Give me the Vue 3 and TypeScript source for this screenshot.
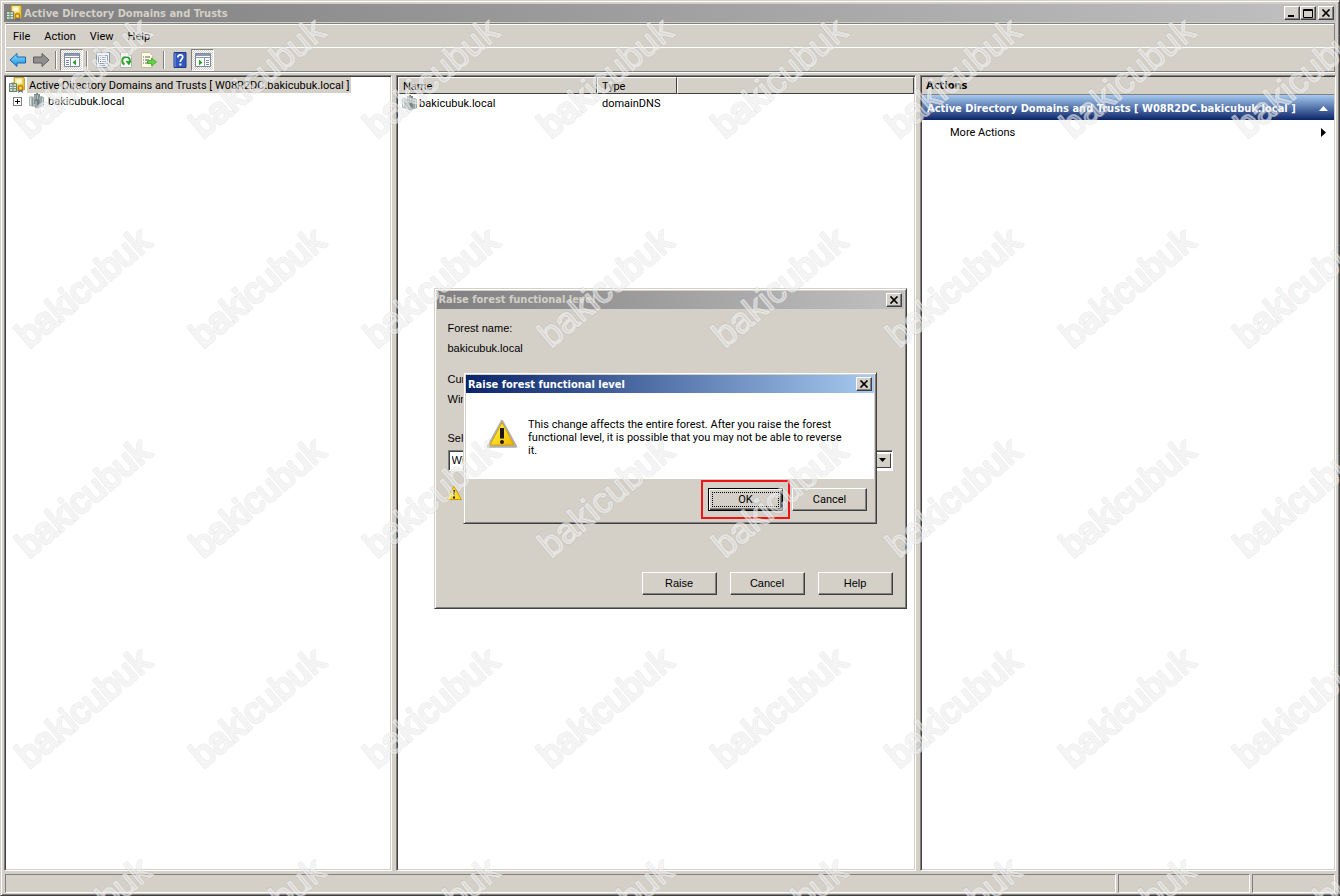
<script setup lang="ts">
import { ref } from 'vue'

const menus: string[] = ['File', 'Action', 'View', 'Help']
const snapIn = 'Active Directory Domains and Trusts'
const rootNode = 'Active Directory Domains and Trusts [ W08R2DC.bakicubuk.local ]'
const domain = 'bakicubuk.local'
const level = ref('r2')

interface Stamp { x: number; y: number }
const stamps: Stamp[] = []
for (let row = 0; row < 5; row++) {
  for (let col = 0; col < 8; col++) {
    stamps.push({ x: 29 + col * 174, y: 139 + row * 210 })
  }
}
</script>

<template>
  <svg class="defs" width="0" height="0" aria-hidden="true">
    <defs>
      <linearGradient id="warn" x1="0" y1="0" x2="1" y2="1">
        <stop offset="0" stop-color="#fff27a" />
        <stop offset=".5" stop-color="#fbdc20" />
        <stop offset="1" stop-color="#f0b008" />
      </linearGradient>
      <linearGradient id="sky" x1="0" y1="0" x2="0" y2="1">
        <stop offset="0" stop-color="#8fdcff" />
        <stop offset="1" stop-color="#1590e0" />
      </linearGradient>
      <symbol id="app-icon" viewBox="0 0 16 16">
        <path d="M5 .5 15 .5 15.500 1.500V13L8 14 5 13z" fill="#e6c23c" stroke="#a88a26" stroke-width=".7" />
        <path d="M6 1.200 13.500 1.200V7L6 8z" fill="#f9ea94" />
        <path d="M7.500 2.500H12V5.500H7.500z" fill="#fffde8" />
        <path d="M0 6.500 4 5.500 8 6.500V15H0z" fill="#6d8373" />
        <path d="M1 8h2.500M4.500 8h2.500M1 10.500h2.500M4.500 10.500h2.500M1 13h2.500M4.500 13h2.500" stroke="#e1f0df" stroke-width="1.300" />
        <path d="M10 12 9 16 11.500 14.500 14 16 13 12" fill="#4468a2" />
        <circle cx="11.500" cy="11" r="2.500" fill="#f0a51c" stroke="#a86508" stroke-width=".8" />
        <circle cx="11.500" cy="11" r="1" fill="#fff3b4" />
      </symbol>
      <symbol id="domain-icon" viewBox="0 0 16 16">
        <path d="M5 1H7V0H9V1H11V11H5z" fill="#7f8c8c" />
        <path d="M6 2v8M8.500 2v8" stroke="#b5c0bf" />
        <path d="M0 4 3 3 5 4V14L3 13.500 0 12.500z" fill="#b1bab9" />
        <path d="M1.500 5v7" stroke="#dfe5e4" />
        <path d="M3.500 5v8" stroke="#8d9998" />
        <path d="M10 4 12.500 3 15 4.500V13L12 14 10 13.500z" fill="#9aa6a3" />
        <path d="M13.500 5v8" stroke="#c8d2d0" />
        <path d="M5.500 7 8 6 10.500 7V15L8 15.500 5.500 14z" fill="#70807e" />
        <path d="M7 8v6" stroke="#c6d2d1" />
      </symbol>
      <symbol id="warn-icon" viewBox="0 0 32 32">
        <path d="M16 3 30 28.500H2z" fill="#b9b9b9" stroke="#b0b0b0" stroke-width="2.500" stroke-linejoin="round" />
        <path d="M16 4.500 28 27H4z" fill="url(#warn)" stroke="#d9a400" stroke-linejoin="round" />
        <path d="M14 10h4V20.500h-4z" fill="#1c1a10" />
        <circle cx="16" cy="24" r="2" fill="#1c1a10" />
      </symbol>
      <symbol id="warn-small" viewBox="0 0 16 16">
        <path d="M8 1 15.300 14.500H.7z" fill="#fbdc20" stroke="#c99b10" stroke-linejoin="round" />
        <path d="M7 5h2v5H7zM7 11.500h2v2H7z" fill="#1c1a10" />
      </symbol>
      <symbol id="close-glyph" viewBox="0 0 10 8">
        <path d="M1.500.5 8.500 7.500M8.500.5 1.500 7.500" stroke="#000" stroke-width="1.700" />
      </symbol>
    </defs>
  </svg>

  <main class="window">
    <header class="titlebar inactive main-title">
      <svg class="ico16"><use href="#app-icon" /></svg>
      <h1>{{ snapIn }}</h1>
      <div class="controls">
        <button class="cap" aria-label="Minimize"><svg width="10" height="8"><path d="M1 7h6" stroke="#000" stroke-width="2" /></svg></button>
        <button class="cap" aria-label="Maximize"><svg width="10" height="9"><path d="M.5 1.500h9M.5.5v8h9v-8z" fill="none" stroke="#000" /></svg></button>
        <button class="cap close" aria-label="Close"><svg width="10" height="8"><use href="#close-glyph" /></svg></button>
      </div>
    </header>

    <nav class="menubar" aria-label="Menu">
      <button v-for="m in menus" :key="m" class="menu">{{ m }}</button>
    </nav>

    <div class="toolbar" role="toolbar" aria-label="Tools">
      <button class="tool" aria-label="Back">
        <svg class="arrow" viewBox="0 0 18 16"><path d="M1 8 8 1.500V5h8.500v6H8v3.500z" fill="url(#sky)" stroke="#1769ad" stroke-linejoin="round" /></svg>
      </button>
      <button class="tool" aria-label="Forward">
        <svg class="arrow" viewBox="0 0 18 16"><path d="M17 8 10 1.500V5H1.500v6H10v3.500z" fill="#8f8f8f" stroke="#5e5e5e" stroke-linejoin="round" /></svg>
      </button>
      <span class="sep"></span>
      <button class="tool pressed" aria-label="Show console tree">
        <svg class="ico16" viewBox="0 0 16 16"><path d="M.5 1.500h15v13H.5z" fill="#fff" stroke="#7d8a9b" /><path d="M1 2h14v2H1z" fill="#8b9cb4" /><path d="M1 5.500h14M6.500 6v8" stroke="#8b97a7" /><path d="M2 8.500h3M2 10.500h3M2 12.500h3" stroke="#678bc1" /><path d="M12 7.500v6L8.500 10.500z" fill="#2ca02a" /></svg>
      </button>
      <span class="sep"></span>
      <button class="tool" aria-label="Properties">
        <svg class="ico16" viewBox="0 0 16 16"><path d="M1.500.5h13v11l-3 4h-10z" fill="#f2f5f9" stroke="#8694a7" /><path d="M3.500 3.500h9v8h-9z" fill="#fff" stroke="#8fa2bb" /><path d="M5 5.500h1M7 5.500h4M5 7.500h1M7 7.500h4M5 9.500h1M7 9.500h4" stroke="#607792" /><path d="M4 13.500h6" stroke="#9babbd" /></svg>
      </button>
      <button class="tool" aria-label="Refresh">
        <svg class="ico16" viewBox="0 0 16 16"><path d="M2.500.5h8l3 3v12h-11z" fill="#fff" stroke="#b4b4b4" /><path d="M10.500.5v3h3" fill="none" stroke="#b4b4b4" /><path d="M6.500 12.500C3 11 3.500 5 8 5 11.500 5 12.500 8 11.500 10" fill="none" stroke="#2ba52b" stroke-width="2" /><path d="M7.500 9 13.500 9 11 13.500z" fill="#2ba52b" /></svg>
      </button>
      <button class="tool" aria-label="Export list">
        <svg class="ico16" viewBox="0 0 16 16"><path d="M.5.500h8l3 3v12H.5z" fill="#fffbe2" stroke="#c6bda2" /><path d="M2 5h1M4 5h5M2 8h1M4 8h4M2 11h1M4 11h4" stroke="#5a5a70" /><path d="M6.500 8.500h4V6l5 4-5 4v-2.500h-4z" fill="#66d33d" stroke="#2e9d26" stroke-width=".7" /></svg>
      </button>
      <span class="sep"></span>
      <button class="tool" aria-label="Help">
        <svg class="ico16" viewBox="0 0 16 16"><path d="M2 .5h12v15H2z" fill="#3159bd" stroke="#203b88" /><path d="M3 1v14" stroke="#7898e6" /><path d="M5.800 5.500C5.800 2 11 2 10.700 5.200 10.500 7.500 8.300 7.300 8.300 10" fill="none" stroke="#fff" stroke-width="1.700" /><path d="M7.400 11.500h2v2h-2z" fill="#fff" /></svg>
      </button>
      <button class="tool pressed" aria-label="Show action pane">
        <svg class="ico16" viewBox="0 0 16 16"><path d="M.5 1.500h15v13H.5z" fill="#fff" stroke="#7d8a9b" /><path d="M1 2h14v2H1z" fill="#8b9cb4" /><path d="M1 5.500h14M9.500 6v8" stroke="#8b97a7" /><path d="M11 8.500h3M11 10.500h3M11 12.500h3" stroke="#678bc1" /><path d="M4 7.500v6l3.500-3z" fill="#2ca02a" /></svg>
      </button>
    </div>

    <div class="panes">
      <section class="pane" aria-label="Console tree">
        <div class="tree-row root">
          <svg class="ico16"><use href="#app-icon" /></svg>
          <span class="selected">{{ rootNode }}</span>
        </div>
        <div class="tree-row child">
          <button class="expander" aria-label="Expand"><svg width="9" height="9"><path d="M2 4.500h5M4.500 2v5" stroke="#000" /></svg></button>
          <svg class="ico16"><use href="#domain-icon" /></svg>
          <span>{{ domain }}</span>
        </div>
      </section>

      <section class="pane" aria-label="Details">
        <table class="list">
          <colgroup><col class="c-name" /><col class="c-type" /><col /></colgroup>
          <thead><tr><th>Name</th><th>Type</th><th class="rest"></th></tr></thead>
          <tbody>
            <tr>
              <td><span class="cell"><svg class="ico16"><use href="#domain-icon" /></svg>{{ domain }}</span></td>
              <td class="type">domainDNS</td>
              <td></td>
            </tr>
          </tbody>
        </table>
      </section>

      <section class="pane" aria-label="Actions">
        <h2 class="actions-head">Actions</h2>
        <button class="group">
          <span>{{ rootNode }}</span>
          <svg width="9" height="5"><path d="M0 5 4.500 0 9 5z" fill="#fff" /></svg>
        </button>
        <button class="more">
          <span>More Actions</span>
          <svg width="5" height="9"><path d="M0 0 5 4.500 0 9z" fill="#000" /></svg>
        </button>
      </section>
    </div>

    <footer class="status">
      <span class="wide"></span><span class="mid"></span><span class="small"></span>
    </footer>
  </main>

  <div class="layer">
    <section class="dialog forest" role="dialog" aria-labelledby="forest-title">
      <header class="titlebar inactive">
        <h2 id="forest-title">Raise forest functional level</h2>
        <button class="cap close" aria-label="Close"><svg width="10" height="8"><use href="#close-glyph" /></svg></button>
      </header>
      <div class="forest-body">
        <p>Forest name:</p>
        <p>{{ domain }}</p>
        <p class="gap">Cur</p>
        <p>Win</p>
        <label class="pick" for="level">Sel</label>
        <div class="combo">
          <select id="level" v-model="level"><option value="r2">Wi</option></select>
          <span class="drop"><svg width="7" height="4"><path d="M0 0h7L3.500 4z" /></svg></span>
        </div>
        <svg class="small-warn"><use href="#warn-small" /></svg>
        <div class="buttons">
          <button class="btn">Raise</button>
          <button class="btn">Cancel</button>
          <button class="btn">Help</button>
        </div>
      </div>
    </section>
  </div>

  <div class="layer">
    <section class="dialog confirm" role="alertdialog" aria-labelledby="confirm-title">
      <header class="titlebar active">
        <h2 id="confirm-title">Raise forest functional level</h2>
        <button class="cap close" aria-label="Close"><svg width="10" height="8"><use href="#close-glyph" /></svg></button>
      </header>
      <div class="message">
        <svg class="big-warn"><use href="#warn-icon" /></svg>
        <p>This change affects the entire forest. After you raise the forest functional level, it is possible that you may not be able to reverse it.</p>
      </div>
      <div class="confirm-buttons">
        <span class="marker"><button class="btn default"><span>OK</span></button></span>
        <button class="btn">Cancel</button>
      </div>
    </section>
  </div>

  <svg class="watermark" aria-hidden="true">
    <g v-for="(s, i) in stamps" :key="i" :transform="`translate(${s.x} ${s.y}) rotate(-40)`">
      <text class="edge">bakicubuk</text>
      <text class="core">bakicubuk</text>
    </g>
  </svg>
</template>

<style>
html, body, #app { height: 100%; }
body { margin: 0; overflow: hidden; }
</style>

<style scoped>
* { box-sizing: border-box; }
.defs { position: absolute; }
.window, .dialog { font: 11px/13px Roboto, "Noto Sans", sans-serif; color: #000; }
button, select { font: inherit; color: inherit; border: 0; padding: 0; margin: 0; background: none; border-radius: 0; }
h1, h2, p { margin: 0; font-size: 11px; }
h1, h2, .group { font-family: "DejaVu Sans Condensed", "Noto Sans", sans-serif; }
p { font-weight: normal; }
svg { display: block; flex: none; }
.ico16 { width: 16px; height: 16px; }

.window {
  height: 100%; min-height: 500px; display: flex; flex-direction: column;
  background: #d4d0c8; padding: 3px 3px 2px;
  border: 1px solid; border-color: #d4d0c8 #404040 #404040 #d4d0c8;
  box-shadow: inset 1px 1px #fff, inset -1px -1px #808080;
}
.titlebar { display: flex; align-items: center; height: 18px; padding: 0 2px; color: #fff; flex: none; }
.titlebar h1, .titlebar h2 { flex: 1; font-weight: bold; white-space: nowrap; }
.inactive { background: linear-gradient(90deg, #808080, #c0c0c0); color: #d4d0c8; }
.active { background: linear-gradient(90deg, #0a246a, #a6caf0); }
.main-title { gap: 2px; }
.controls { display: flex; }
.cap {
  width: 16px; height: 14px; display: grid; place-items: center; background: #d4d0c8;
  border: 1px solid; border-color: #fff #404040 #404040 #fff; box-shadow: inset -1px -1px #808080;
}
.controls .close { margin-left: 2px; }

.menubar {
  height: 25px; margin: 1px 1px 0; display: flex; align-items: center; flex: none;
  border: 1px solid; border-color: #808080 #808080 #fff #fff; box-shadow: inset 0 1px #fff;
}
.menu { padding: 1px 7px 0; height: 20px; }
.toolbar {
  height: 24px; margin: 0 1px; display: flex; align-items: center; flex: none;
  border: 1px solid; border-color: #d4d0c8 #808080 #808080 #fff; box-shadow: 0 1px #fff;
}
.tool { width: 23px; height: 22px; display: grid; place-items: center; }
.arrow { width: 18px; height: 16px; }
.pressed {
  border: 1px solid; border-color: #808080 #fff #fff #808080;
  background: repeating-conic-gradient(#fff 0 25%, #d4d0c8 0 50%) 0 0 / 2px 2px;
}
.sep { width: 1px; height: 18px; margin: 0 4px 0 3px; background: #808080; box-shadow: 1px 0 #fff; }

.panes { flex: 1; min-height: 0; margin-top: 3px; display: grid; grid-template-columns: 388fr 520fr 416fr; gap: 4px; }
.pane {
  min-width: 0; overflow: hidden; background: #fff; border: 1px solid;
  border-color: #808080 #fff #fff #808080; box-shadow: inset 1px 1px #404040, inset -1px -1px #d4d0c8; padding: 1px;
}
.tree-row { display: flex; align-items: center; height: 16px; white-space: nowrap; }
.root { padding-left: 3px; gap: 2px; }
.selected { background: #d4d0c8; padding: 2px 2px 1px; }
.child { padding-left: 7px; gap: 7px; }
.child span { margin-left: -4px; }
.expander { width: 9px; height: 9px; box-shadow: inset 0 0 0 1px #808080; }

.list { width: 100%; border-collapse: separate; border-spacing: 0; table-layout: fixed; }
.c-name { width: 199px; }
.c-type { width: 80px; }
th {
  height: 17px; padding: 2px 4px 0; font-weight: normal; text-align: left; line-height: 13px; background: #d4d0c8;
  border: 1px solid; border-color: #fff #404040 #404040 #fff;
}
td { height: 18px; padding: 0; }
.cell { display: flex; align-items: center; gap: 1px; padding-left: 4px; }
.type { padding-left: 5px; }

.actions-head { height: 18px; padding: 2px 4px 0; background: #d4d0c8; border-bottom: 1px solid #808080; }
.group {
  width: 100%; height: 25px; display: flex; align-items: center; justify-content: space-between;
  padding: 1px 6px 0 5px; color: #fff; font-weight: bold; white-space: nowrap; background: linear-gradient(#a6caf0, #0a246a);
}
.more { width: 100%; height: 24px; display: flex; align-items: center; justify-content: space-between; padding: 0 8px 0 28px; }

.status { height: 19px; margin: 3px 1px 0; display: flex; gap: 2px; flex: none; }
.status span { border: 1px solid; border-color: #808080 #fff #fff #808080; }
.wide { flex: 1; }
.mid { width: 132px; }
.small { width: 83px; }

.layer { position: absolute; inset: 0; display: grid; place-items: center; pointer-events: none; }
.dialog {
  pointer-events: auto; background: #d4d0c8; padding: 2px; border: 1px solid;
  border-color: #d4d0c8 #404040 #404040 #d4d0c8; box-shadow: inset 1px 1px #fff, inset -1px -1px #808080;
}
.forest { width: 473px; }
.confirm { width: 414px; }
.forest-body { padding: 9px 11px 11px; font-family: "Liberation Sans", Arial, sans-serif; }
.forest-body p { line-height: 20px; }
.forest-body .gap { margin-top: 11px; }
.pick { display: block; margin-top: 19px; line-height: 20px; }
.combo {
  display: flex; height: 21px; margin-top: 2px; background: #fff; border: 1px solid;
  border-color: #808080 #fff #fff #808080; box-shadow: inset 1px 1px #404040; padding: 2px 1px;
}
.combo select { flex: 1; appearance: none; outline: 0; padding-left: 2px; }
.drop {
  width: 16px; display: grid; place-items: center; background: #d4d0c8; border: 1px solid;
  border-color: #fff #404040 #404040 #fff; pointer-events: none;
}
.small-warn { width: 16px; height: 16px; margin: 14px 0 0 -2px; }
.buttons { display: flex; justify-content: flex-end; gap: 13px; margin-top: 71px; }
.btn {
  width: 75px; height: 23px; background: #d4d0c8; border: 1px solid;
  border-color: #fff #404040 #404040 #fff; box-shadow: inset -1px -1px #808080;
}
.message { display: flex; align-items: flex-start; height: 86px; padding: 25px 26px 0 20px; gap: 10px; background: #fff; }
.big-warn { width: 32px; height: 32px; }
.confirm-buttons { display: flex; justify-content: flex-end; align-items: center; height: 42px; padding: 0 7px 2px 0; gap: 2px; }
.marker { border: 2px solid #f01414; padding: 6px 5px; }
.default { display: block; border-color: #000; box-shadow: inset 1px 1px #fff, inset -1px -1px #404040, inset -2px -2px #808080; padding: 3px; }
.default span { display: block; height: 100%; border: 1px dotted #000; line-height: 13px; }

.watermark { position: absolute; inset: 0; width: 100%; height: 100%; pointer-events: none; }
.watermark text { font: 36px "Liberation Sans", Arial, sans-serif; stroke-linejoin: round; }
.edge { fill: none; stroke: #000; stroke-opacity: .1; stroke-width: 3px; }
.core { fill: #fff; fill-opacity: .25; stroke: #fff; stroke-opacity: .55; stroke-width: 2px; }
</style>
